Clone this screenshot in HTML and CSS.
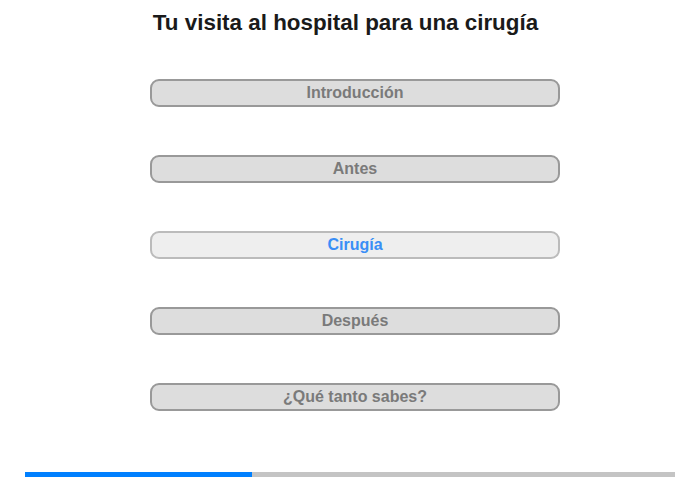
FILE: index.html
```html
<!DOCTYPE html>
<html lang="es">
<head>
  <meta charset="UTF-8">
  <meta name="viewport" content="width=device-width, initial-scale=1.0">
  <title>Tu visita al hospital para una cirugía</title>
  <link rel="stylesheet" href="styles.css">
</head>
<body>

<header>Tu visita al hospital para una cirugía</header>

<!-- Chapter menu -->
<nav class="chapters">
  <a href="#" class="chapter">Introducción</a>
  <a href="#" class="chapter">Antes</a>
  <a href="#" class="chapter current">Cirugía</a>
  <a href="#" class="chapter">Después</a>
  <a href="#" class="chapter">¿Qué tanto sabes?</a>
</nav>

<div class="progress">
  <div class="progress-done" style="width: 34.9%"></div>
</div>

</body>
</html>
```

FILE: styles.css
```css
/* Basic styling */
body {
  font-family: 'Liberation Sans', Arial, sans-serif;
  background-color: #fff;
  margin: 0;
  padding: 0;
  width: 700px;
  height: 480px;
  display: flex;
  flex-direction: column;
  align-items: center;
}
header {
  margin-top: 10px;
  margin-left: -9px;
  font-size: 22.4px;
  font-weight: bold;
  color: #1a1a1a;
  line-height: 26px;
}
.chapters {
  display: flex;
  flex-direction: column;
  gap: 48px;
  margin-top: 43px;
  margin-left: 10px;
}
.chapter {
  display: block;
  box-sizing: border-box;
  width: 410px;
  height: 28px;
  line-height: 24px;
  border: 2px solid #999;
  border-radius: 9px;
  background-color: #ddd;
  color: #7a7a7a;
  font-size: 16px;
  font-weight: bold;
  text-align: center;
  text-decoration: none;
}
.chapter.current {
  background-color: #eee;
  border-color: #bbb;
  color: #3a8ef6;
}

/* Progress bar */
.progress {
  margin-top: 61px;
  width: 650px;
  height: 5px;
  background-color: #c4c4c4;
}
.progress-done {
  height: 100%;
  background-color: #0080ff;
}
```
